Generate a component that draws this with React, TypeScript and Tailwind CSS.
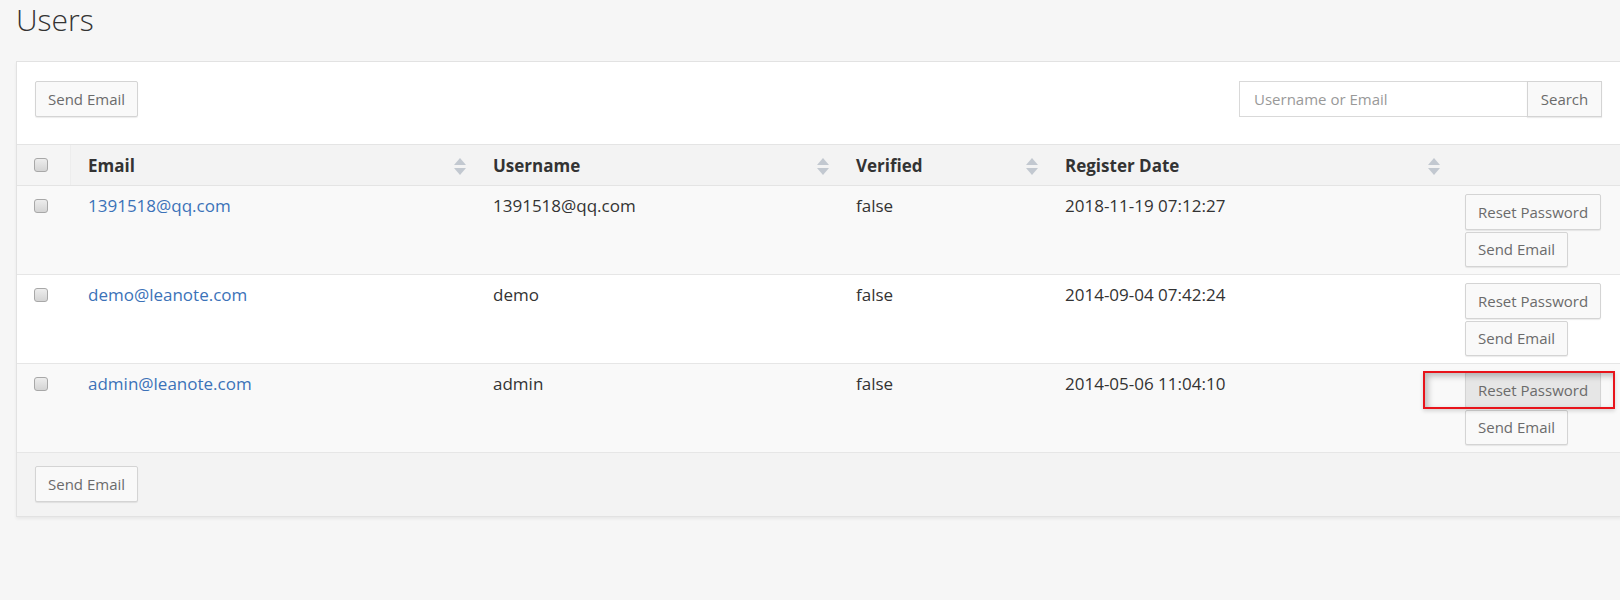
import React from "react";

const users = [
  { email: "1391518@qq.com", username: "1391518@qq.com", verified: "false", date: "2018-11-19 07:12:27" },
  { email: "demo@leanote.com", username: "demo", verified: "false", date: "2014-09-04 07:42:24" },
  { email: "admin@leanote.com", username: "admin", verified: "false", date: "2014-05-06 11:04:10" },
];

const cols = "grid grid-cols-[54px_406px_362px_209px_400px_1fr]";

function SortIcon() {
  return (
    <svg width="12" height="17" viewBox="0 0 12 17" className="shrink-0">
      <path d="M0 7 L6 0 L12 7 Z" fill="#c2c8d0" />
      <path d="M0 10 L6 17 L12 10 Z" fill="#c2c8d0" />
    </svg>
  );
}

function Checkbox() {
  return (
    <span className="block w-[14px] h-[14px] rounded-[3px] border border-[#a8a8a8] bg-gradient-to-b from-[#ededed] to-[#d4d4d4]" />
  );
}

function Btn({ children, active, short }: { children: React.ReactNode; active?: boolean; short?: boolean }) {
  return (
    <button
      className={`px-3 border border-[#d4d4d4] rounded-[2px] text-[15px] leading-none text-[#6b6b6b] shadow-[0_1px_1px_rgba(0,0,0,0.08)] ${
        short ? "h-[35px]" : "h-9"
      } ${active ? "bg-[#e6e6e6]" : "bg-[#f9f9f9]"}`}
    >
      {children}
    </button>
  );
}

export default function App() {
  return (
    <div
      className="h-[600px] w-full overflow-hidden bg-[#f6f6f6] text-[#333]"
      style={{ fontFamily: '"Open Sans", "Liberation Sans", sans-serif' }}
    >
      <h1 className="pl-4 pt-[2px] text-[30px] leading-[36px] font-light text-[#333]">Users</h1>

      <div className="ml-4 mt-[23px] w-[1606px] border border-[#e2e2e2] bg-white shadow-[0_2px_3px_rgba(0,0,0,0.06)]">
        {/* toolbar */}
        <div className="flex items-center justify-between pl-[18px] pr-[19px] pt-[19px] pb-[27px]">
          <Btn>Send Email</Btn>
          <div className="flex">
            <div className="h-9 w-[288px] border border-[#d9d9d9] border-r-0 bg-white pl-[14px] flex items-center text-[15px] text-[#999]">
              Username or Email
            </div>
            <button className="h-9 w-[75px] border border-[#d4d4d4] bg-[#f9f9f9] text-[15px] text-[#6b6b6b] shadow-[0_1px_1px_rgba(0,0,0,0.08)]">
              Search
            </button>
          </div>
        </div>

        {/* header */}
        <div className={`${cols} h-[42px] border-t border-b border-[#e4e4e4] bg-[#f3f3f3] text-[17px] font-bold text-[#333]`}>
          <div className="flex items-center pl-[17px] bg-[#f5f5f5] border-r border-[#ededed]">
            <Checkbox />
          </div>
          <div className="flex items-center justify-between pl-[17px] pr-[11px] pt-[2px]">
            <span>Email</span>
            <SortIcon />
          </div>
          <div className="flex items-center justify-between pl-[16px] pr-[10px] pt-[2px]">
            <span>Username</span>
            <SortIcon />
          </div>
          <div className="flex items-center justify-between pl-[17px] pr-[10px] pt-[2px]">
            <span>Verified</span>
            <SortIcon />
          </div>
          <div className="flex items-center justify-between pl-[17px] pr-[8px] pt-[2px]">
            <span>Register Date</span>
            <SortIcon />
          </div>
          <div />
        </div>

        {/* rows */}
        {users.map((u, i) => (
          <div
            key={u.email}
            className={`${cols} border-b border-[#e6e6e6] text-[17px] leading-6 ${
              i % 2 === 0 ? "bg-[#f9f9f9]" : "bg-white"
            }`}
          >
            <div className="pl-[17px] pt-[13px]">
              <Checkbox />
            </div>
            <div className="pl-[17px] pt-2 text-[#3b72b8]">{u.email}</div>
            <div className="pl-[16px] pt-2">{u.username}</div>
            <div className="pl-[17px] pt-2">{u.verified}</div>
            <div className="pl-[17px] pt-2">{u.date}</div>
            <div className="pl-[17px] pt-2 pb-[7px] flex flex-col items-start gap-[2px]">
              {i === 2 ? (
                <div className="relative">
                  <Btn active>Reset Password</Btn>
                  <span className="absolute -left-[42px] -right-[14px] -top-[1px] -bottom-[1px] border-2 border-[#e8141b] shadow-[inset_3px_3px_6px_rgba(0,0,0,0.25),0_2px_4px_rgba(0,0,0,0.15)] pointer-events-none" />
                </div>
              ) : (
                <Btn>Reset Password</Btn>
              )}
              <Btn short>Send Email</Btn>
            </div>
          </div>
        ))}

        {/* footer */}
        <div className="bg-[#f3f3f3] pl-[18px] pt-[13px] pb-[14px]">
          <Btn>Send Email</Btn>
        </div>
      </div>
    </div>
  );
}
